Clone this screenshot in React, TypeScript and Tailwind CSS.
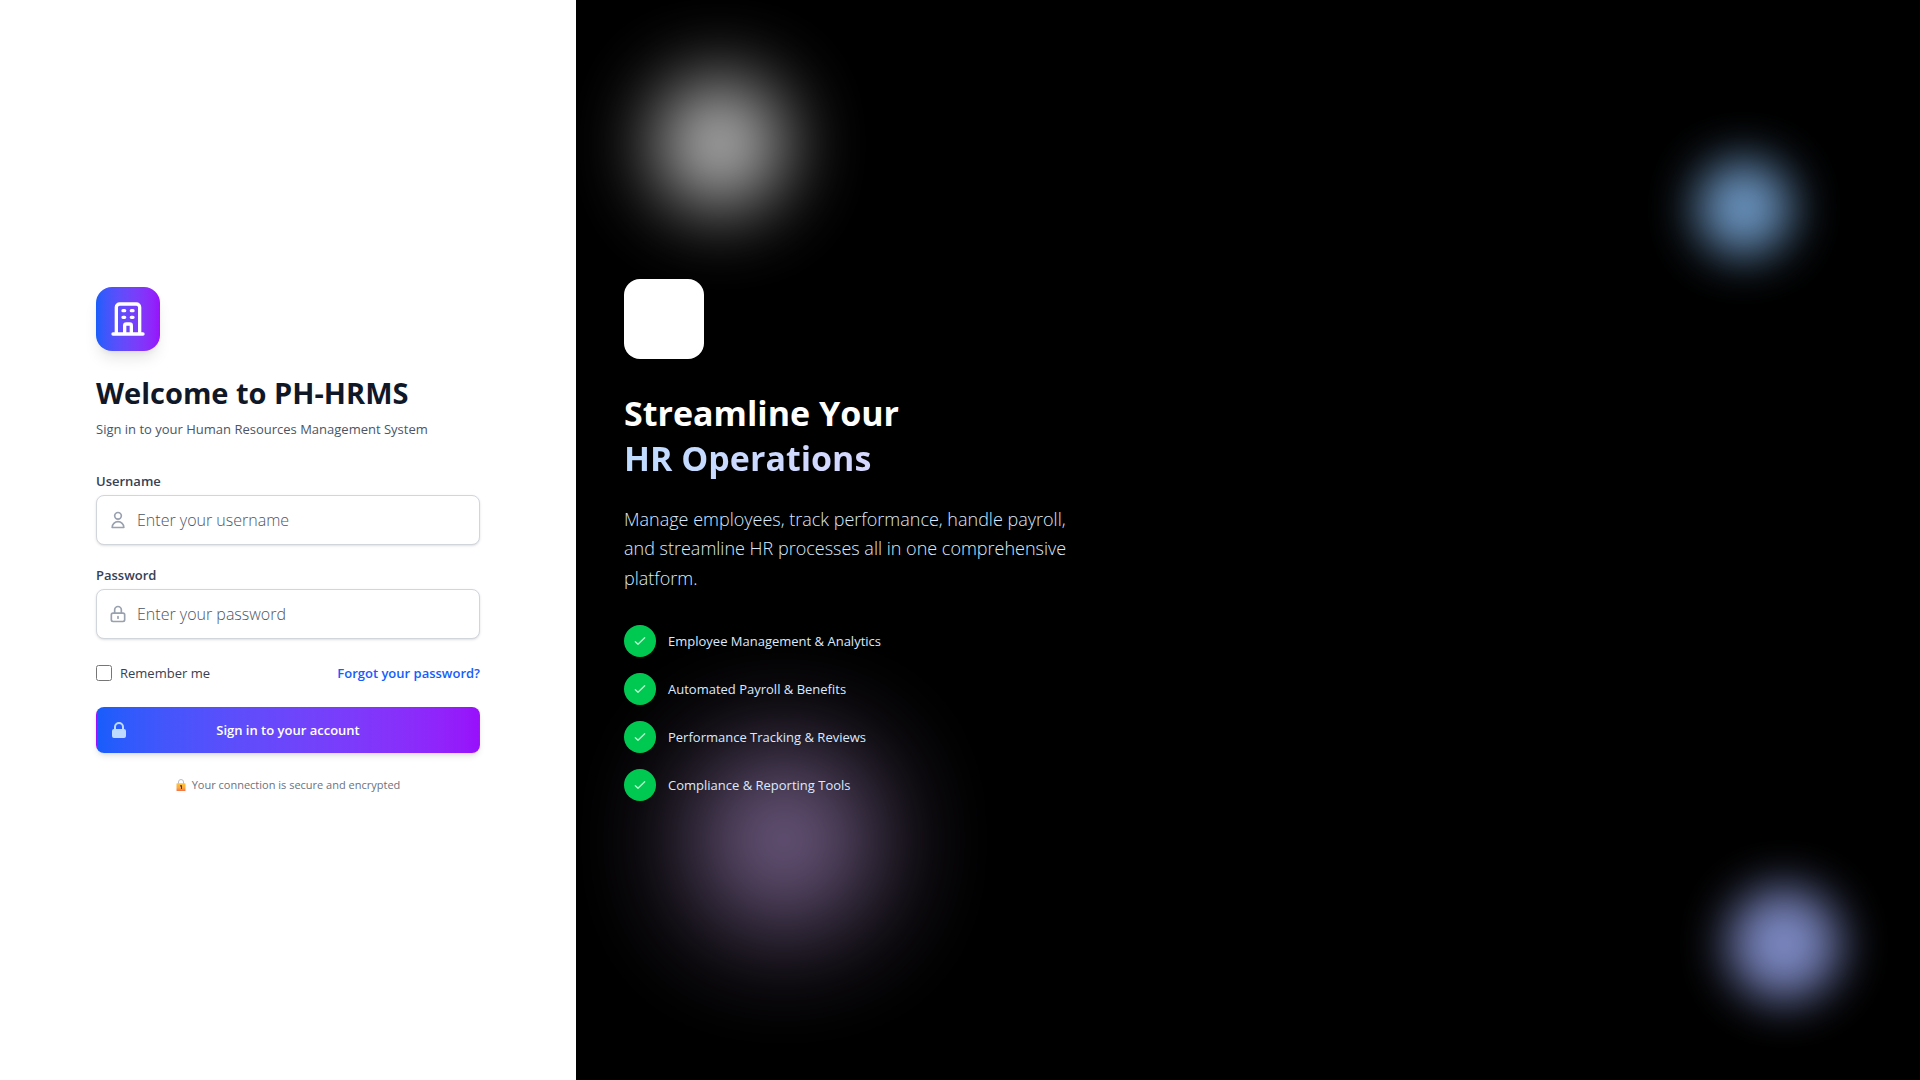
import React from "react";

const features = [
  "Employee Management & Analytics",
  "Automated Payroll & Benefits",
  "Performance Tracking & Reviews",
  "Compliance & Reporting Tools",
];

function StrokeIcon({ d, className }: { d: string; className: string }) {
  return (
    <svg className={className} viewBox="0 0 24 24" fill="none" stroke="currentColor" strokeWidth={2} strokeLinecap="round" strokeLinejoin="round" aria-hidden="true">
      <path d={d} />
    </svg>
  );
}

const BUILDING =
  "M19 21V5a2 2 0 00-2-2H7a2 2 0 00-2 2v16m14 0h2m-2 0h-5m-9 0H3m2 0h5M9 7h1m-1 4h1m4-4h1m-1 4h1m-5 10v-5a1 1 0 011-1h2a1 1 0 011 1v5m-4 0h4";
const USER = "M16 7a4 4 0 11-8 0 4 4 0 018 0zM12 14a7 7 0 00-7 7h14a7 7 0 00-7-7z";
const LOCK =
  "M12 15v2m-6 4h12a2 2 0 002-2v-6a2 2 0 00-2-2H6a2 2 0 00-2 2v6a2 2 0 002 2zm10-10V7a4 4 0 00-8 0v4h8z";
const CHECK = "M5 13l4 4L19 7";

function Field({ id, label, type, placeholder, icon }: { id: string; label: string; type: string; placeholder: string; icon: string }) {
  return (
    <div>
      <label htmlFor={id} className="mb-1 block text-[13px] leading-5 font-semibold text-gray-700">
        {label}
      </label>
      <div className="relative">
        <StrokeIcon d={icon} className="pointer-events-none absolute inset-y-0 left-3 my-auto size-5 text-gray-400" />
        <input
          id={id}
          type={type}
          placeholder={placeholder}
          className="block w-full rounded-lg border border-gray-300 bg-white py-3 pr-3 pl-10 text-base font-light text-gray-900 shadow-sm placeholder:text-gray-600"
        />
      </div>
    </div>
  );
}

function PadlockBadge() {
  return (
    <svg className="h-3 w-[10px]" viewBox="0 0 10 12" aria-hidden="true">
      <defs>
        <linearGradient id="padlock" x1="0" y1="0" x2="0" y2="1">
          <stop offset="0" stopColor="#ffc53d" />
          <stop offset="0.6" stopColor="#fba93f" />
          <stop offset="1" stopColor="#f5704a" />
        </linearGradient>
      </defs>
      <path d="M2.5 5V3a2.5 2.5 0 015 0v2" fill="none" stroke="#b9bcc4" strokeWidth="1" />
      <rect x="0.5" y="4.2" width="9" height="7.8" rx="0.5" fill="url(#padlock)" />
      <path d="M4 6.3h2v3.7H5V7.6H4z" fill="#4a3358" />
    </svg>
  );
}

export default function App() {
  return (
    <div className="flex min-h-screen bg-white font-['Open_Sans',sans-serif]">
      <main className="flex w-[30%] shrink-0 items-center justify-center">
        <div className="w-full max-w-sm">
          <div className="flex size-16 items-center justify-center rounded-2xl bg-linear-to-r from-blue-600 to-purple-600 text-white shadow-lg">
            <StrokeIcon d={BUILDING} className="size-10" />
          </div>
          <h1 className="mt-6 text-[29px] leading-9 font-bold text-gray-900">Welcome to PH-HRMS</h1>
          <p className="mt-2 text-[13px] leading-5 text-gray-600">Sign in to your Human Resources Management System</p>

          <form className="mt-8 space-y-6" onSubmit={(e) => e.preventDefault()}>
            <div className="space-y-5">
              <Field id="username" label="Username" type="text" placeholder="Enter your username" icon={USER} />
              <Field id="password" label="Password" type="password" placeholder="Enter your password" icon={LOCK} />
            </div>
            <div className="flex items-center justify-between text-[13px] leading-5">
              <div className="flex items-center gap-2">
                <input id="remember" type="checkbox" className="size-4" />
                <label htmlFor="remember" className="text-gray-700">
                  Remember me
                </label>
              </div>
              <a href="#forgot" className="font-semibold text-blue-600">
                Forgot your password?
              </a>
            </div>
            <button
              type="submit"
              className="relative flex w-full justify-center rounded-lg border border-transparent bg-linear-to-r from-blue-600 to-purple-600 px-4 py-3 text-[13px] leading-5 font-semibold text-white shadow-md"
            >
              <svg className="absolute inset-y-0 left-3 my-auto size-5 text-blue-200" viewBox="0 0 20 20" fill="currentColor" aria-hidden="true">
                <path fillRule="evenodd" clipRule="evenodd" d="M5 9V7a5 5 0 0110 0v2a2 2 0 012 2v5a2 2 0 01-2 2H5a2 2 0 01-2-2v-5a2 2 0 012-2zm8-2v2H7V7a3 3 0 016 0z" />
              </svg>
              Sign in to your account
            </button>
          </form>
          <p className="mt-6 flex items-center justify-center gap-[6px] text-[11px] leading-4 text-gray-500">
            <PadlockBadge />
            Your connection is secure and encrypted
          </p>
        </div>
      </main>

      <aside className="relative flex flex-1 items-center overflow-hidden bg-black px-12">
        <div className="absolute top-20 left-20 size-32 rounded-full bg-white opacity-75 blur-2xl" />
        <div className="absolute top-40 right-32 size-24 rounded-full bg-blue-300 opacity-75 blur-xl" />
        <div className="absolute bottom-40 left-32 size-40 rounded-full bg-purple-300 opacity-75 blur-3xl" />
        <div className="absolute right-20 bottom-20 size-28 rounded-full bg-indigo-300 opacity-75 blur-xl" />

        <div className="relative w-full max-w-md">
          <div className="size-20 rounded-2xl bg-white" />
          <h2 className="mt-8 text-[34px] leading-[45px] font-bold text-white">
            Streamline Your
            <span className="block bg-linear-to-r from-blue-200 to-purple-200 bg-clip-text text-transparent">HR Operations</span>
          </h2>
          <p className="mt-6 text-lg leading-relaxed font-light text-blue-100">
            Manage employees, track performance, handle payroll, and streamline HR processes all in one comprehensive platform.
          </p>
          <ul className="mt-8 space-y-4">
            {features.map((feature) => (
              <li key={feature} className="flex items-center gap-3 text-[13px] leading-5 text-blue-100">
                <span className="flex size-8 items-center justify-center rounded-full bg-green-500">
                  <StrokeIcon d={CHECK} className="size-4 text-green-200" />
                </span>
                {feature}
              </li>
            ))}
          </ul>
        </div>
      </aside>
    </div>
  );
}
